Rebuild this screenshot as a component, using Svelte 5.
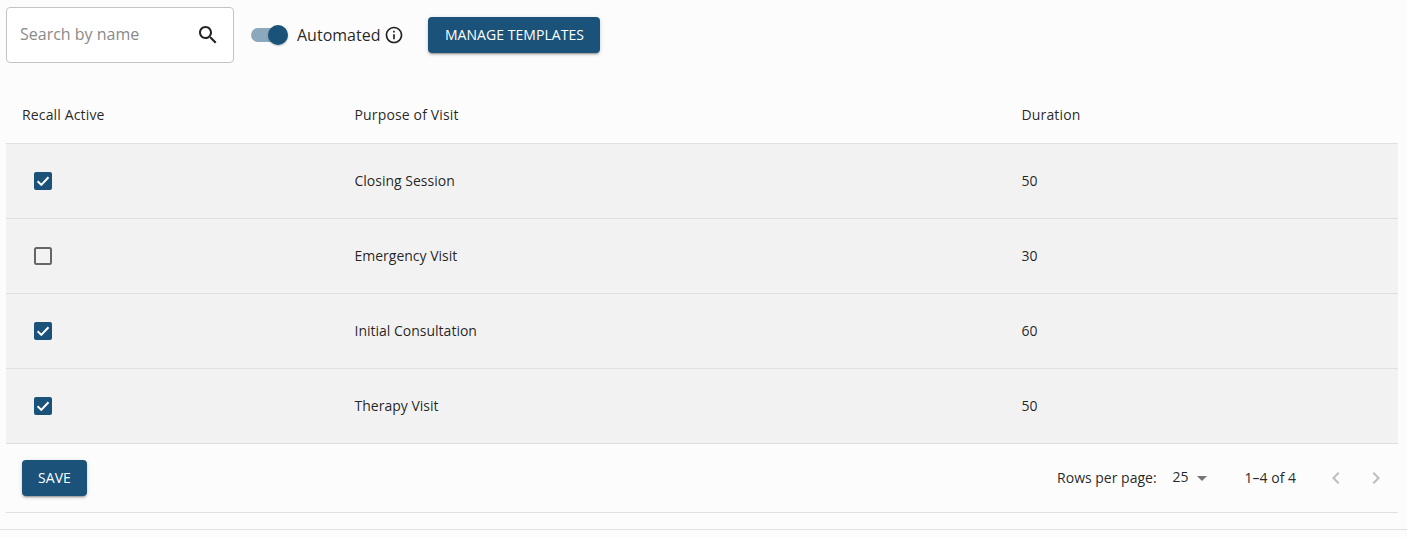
<script>
  const rows = [
    { on: true, name: 'Closing Session', duration: 50 },
    { on: false, name: 'Emergency Visit', duration: 30 },
    { on: true, name: 'Initial Consultation', duration: 60 },
    { on: true, name: 'Therapy Visit', duration: 50 }
  ];
</script>

<div class="page">
  <div class="toolbar">
    <div class="search">
      <span class="placeholder">Search by name</span>
      <svg class="search-icon" viewBox="0 0 24 24" width="24" height="24"><path d="M15.5 14h-.79l-.28-.27C15.41 12.59 16 11.11 16 9.5 16 5.91 13.09 3 9.5 3S3 5.91 3 9.5 5.91 16 9.5 16c1.61 0 3.09-.59 4.23-1.57l.27.28v.79l5 4.99L20.49 19l-4.99-5zm-6 0C7.01 14 5 11.99 5 9.5S7.01 5 9.5 5 14 7.01 14 9.5 11.99 14 9.5 14z"/></svg>
    </div>
    <div class="switch"><span class="track"></span><span class="thumb"></span></div>
    <span class="auto-label">Automated</span>
    <svg class="info" viewBox="0 0 24 24" width="20" height="20"><path d="M11 7h2v2h-2zm0 4h2v6h-2zm1-9C6.48 2 2 6.48 2 12s4.48 10 10 10 10-4.48 10-10S17.52 2 12 2zm0 18c-4.41 0-8-3.59-8-8s3.59-8 8-8 8 3.59 8 8-3.59 8-8 8z"/></svg>
    <button class="btn manage">MANAGE TEMPLATES</button>
  </div>

  <div class="table">
    <div class="row head">
      <div class="cell">Recall Active</div>
      <div class="cell">Purpose of Visit</div>
      <div class="cell">Duration</div>
    </div>
    {#each rows as r}
      <div class="row body">
        <div class="cell">
          {#if r.on}
            <svg class="check" viewBox="0 0 18 18" width="18" height="18"><rect width="18" height="18" rx="2" fill="#1a5279"/><path d="M3.6 9.3l3.7 3.6 7.2-7.6" fill="none" stroke="#fff" stroke-width="2"/></svg>
          {:else}
            <svg class="check" viewBox="0 0 18 18" width="18" height="18"><rect x="1" y="1" width="16" height="16" rx="1.5" fill="none" stroke="#666" stroke-width="2"/></svg>
          {/if}
        </div>
        <div class="cell">{r.name}</div>
        <div class="cell">{r.duration}</div>
      </div>
    {/each}
    <div class="foot">
      <button class="btn save">SAVE</button>
      <div class="pager">
        <span class="rpp">Rows per page:</span>
        <span class="count">25</span>
        <svg class="caret" viewBox="0 0 10 5" width="10" height="5"><path d="M0 0l5 5 5-5z" fill="#757575"/></svg>
        <span class="range">1–4 of 4</span>
        <svg class="nav first" viewBox="0 0 24 24" width="24" height="24"><path d="M15.41 7.41 14 6l-6 6 6 6 1.41-1.41L10.83 12z"/></svg>
        <svg class="nav" viewBox="0 0 24 24" width="24" height="24"><path d="M10 6 8.59 7.41 13.17 12l-4.58 4.59L10 18l6-6z"/></svg>
      </div>
    </div>
  </div>
  <div class="bottom-rule"></div>
</div>

<style>
  :global(body) {
    margin: 0;
    background: #fcfcfc;
  }
  .page {
    height: 537px;
    overflow: hidden;
    font-family: "Open Sans", "Noto Sans", sans-serif;
    color: rgba(0, 0, 0, 0.87);
  }
  .toolbar {
    display: flex;
    align-items: center;
    height: 56px;
    padding: 7px 0 0 6px;
  }
  .search {
    box-sizing: border-box;
    width: 228px;
    height: 56px;
    display: flex;
    align-items: center;
    justify-content: space-between;
    padding: 0 13px 0 13px;
    border: 1px solid #c4c4c4;
    border-radius: 4px;
    background: #fff;
  }
  .placeholder {
    font-size: 16px;
    color: #8a8a8a;
    margin-bottom: 2px;
  }
  .search-icon {
    fill: #222;
  }
  .switch {
    position: relative;
    width: 38px;
    height: 20px;
    margin-left: 16px;
  }
  .track {
    position: absolute;
    left: 1px;
    top: 3px;
    width: 34px;
    height: 14px;
    border-radius: 7px;
    background: #8ca8bc;
  }
  .thumb {
    position: absolute;
    left: 18px;
    top: 0;
    width: 20px;
    height: 20px;
    border-radius: 50%;
    background: #1a5279;
    box-shadow: 0 1px 2px rgba(0, 0, 0, 0.25);
  }
  .auto-label {
    margin-left: 9px;
    font-size: 16px;
    line-height: 24px;
  }
  .info {
    margin-left: 4px;
    fill: #222;
  }
  .btn {
    border: 0;
    border-radius: 4px;
    background: #1a5279;
    color: #fff;
    font-family: inherit;
    font-size: 14px;
    font-weight: 500;
    line-height: 24px;
    letter-spacing: 0.05px;
    padding: 6px 16px;
    box-shadow: 0 3px 1px -2px rgba(0,0,0,.2), 0 2px 2px 0 rgba(0,0,0,.14), 0 1px 5px 0 rgba(0,0,0,.12);
  }
  .manage {
    margin-left: 24px;
    width: 172px;
    height: 36px;
    padding: 0;
    white-space: nowrap;
  }
  .table {
    margin: 24px 9px 0 6px;
    font-size: 14px;
  }
  .row {
    display: grid;
    grid-template-columns: 332.5px 667px 1fr;
    border-bottom: 1px solid #e0e0e0;
    box-sizing: border-box;
  }
  .cell {
    display: flex;
    align-items: center;
    padding: 0 0 2px 16px;
  }
  .head {
    height: 57px;
    letter-spacing: 0.15px;
  }
  .body {
    height: 75px;
    background: #f2f2f2;
  }
  .check {
    margin: 2px 0 0 12px;
  }
  .foot {
    box-sizing: border-box;
    height: 69px;
    display: flex;
    align-items: center;
    justify-content: space-between;
    padding: 0 10px 0 16px;
    border-bottom: 1px solid #e0e0e0;
  }
  .save {
    width: 65px;
    height: 36px;
    padding: 0;
  }
  .pager {
    display: flex;
    align-items: center;
  }
  .rpp {
    margin: 0 16px 2px 0;
  }
  .count {
    margin: 0 8px 4px 0;
  }
  .caret {
    margin-right: 38px;
  }
  .range {
    margin: 0 28px 2px 0;
  }
  .nav {
    fill: #bdbdbd;
    margin-left: 16px;
  }
  .nav.first {
    margin-left: 0;
  }
  .bottom-rule {
    margin-top: 16px;
    border-top: 1px solid #e0e0e0;
  }
</style>
